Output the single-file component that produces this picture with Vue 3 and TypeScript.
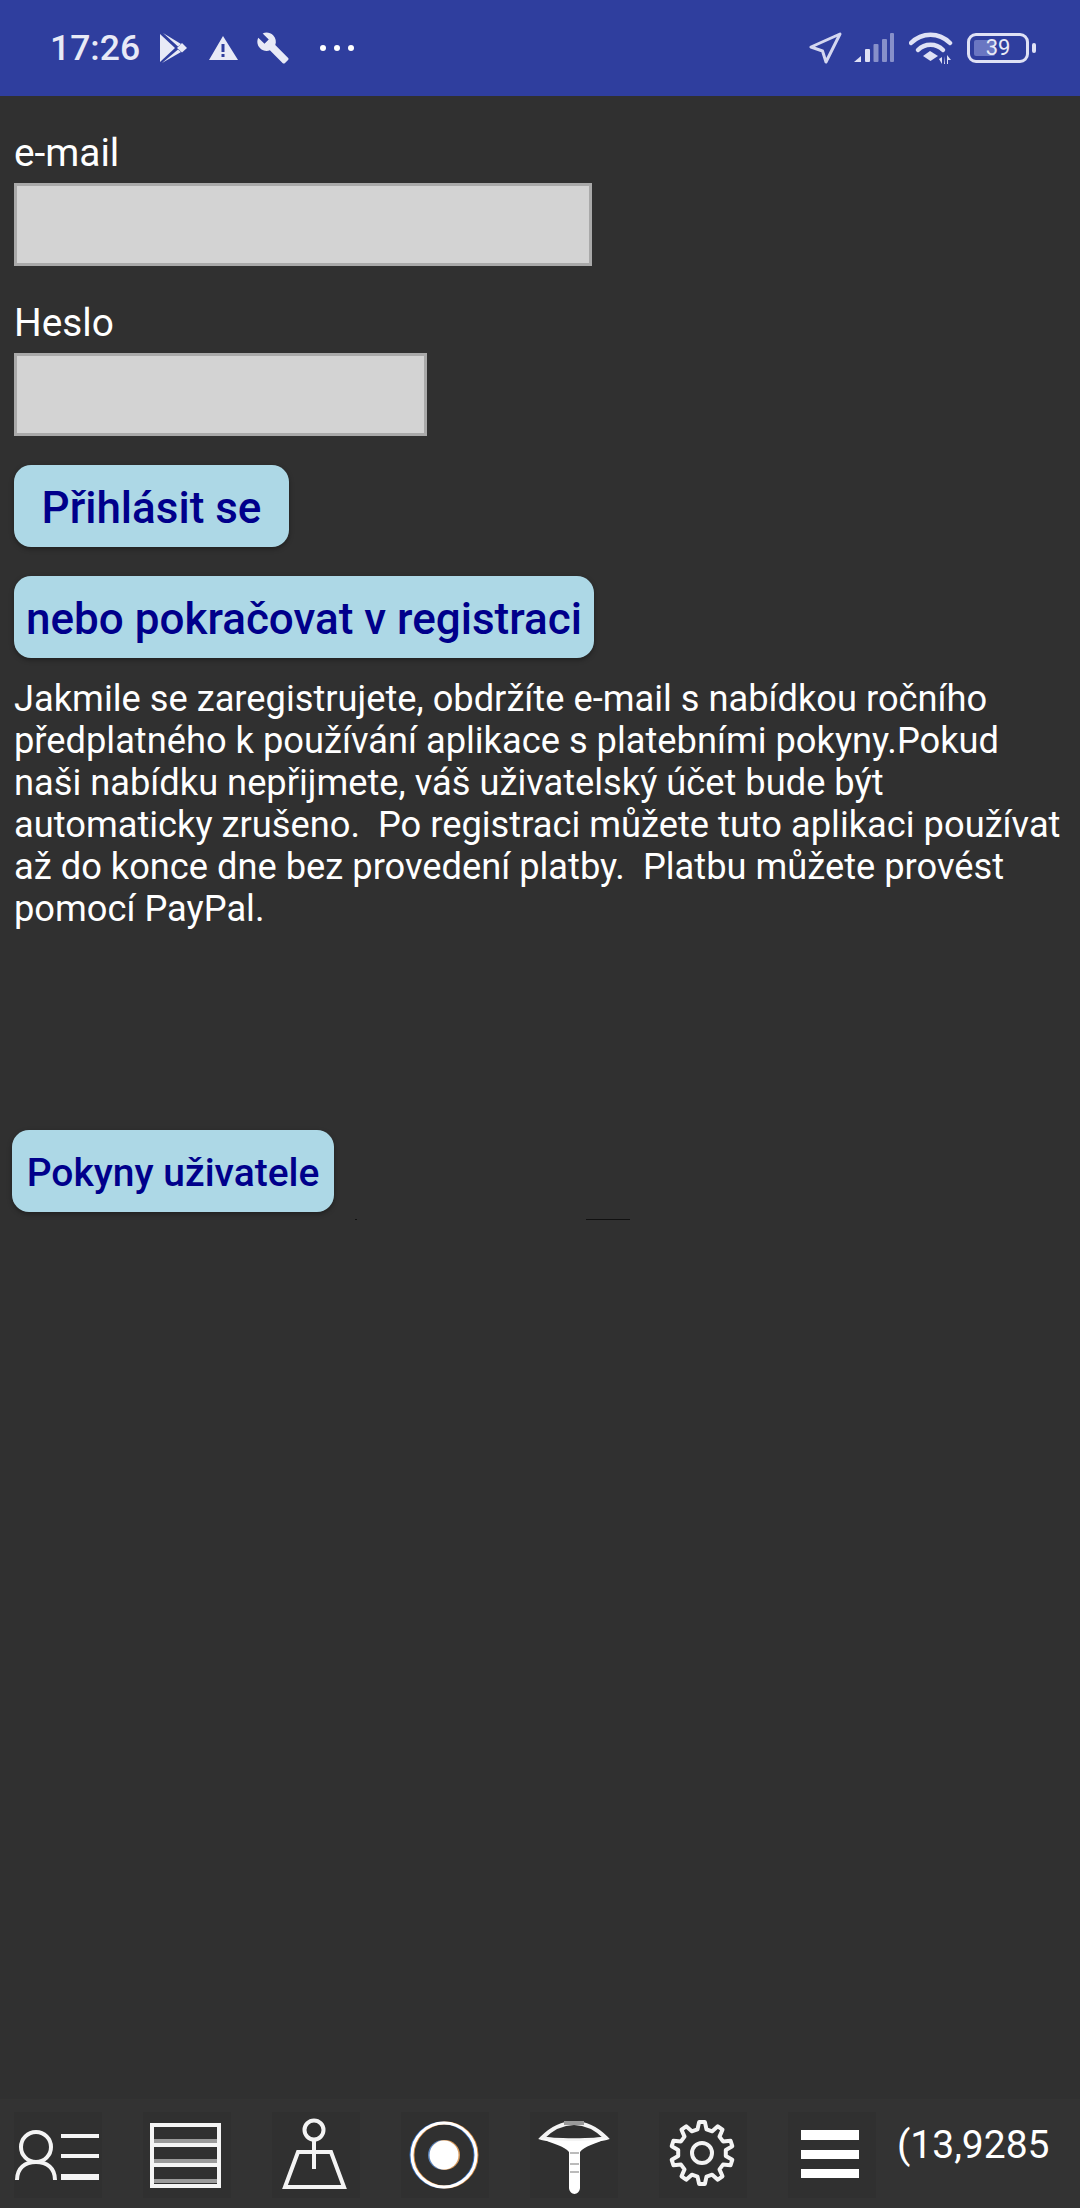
<script setup lang="ts">
const info =
  'Jakmile se zaregistrujete, obdržíte e-mail s nabídkou ročního předplatného k používání aplikace s platebními pokyny.Pokud naši nabídku nepřijmete, váš uživatelský účet bude být automaticky zrušeno.  Po registraci můžete tuto aplikaci používat až do konce dne bez provedení platby.  Platbu můžete provést pomocí PayPal.'

// gear outline, 10 teeth
function gearPath(cx: number, cy: number, outer: number, inner: number, teeth: number): string {
  const pts: string[] = []
  for (let i = 0; i < teeth; i++) {
    const step = (Math.PI * 2) / teeth
    const a = i * step - Math.PI / 2
    const list: [number, number][] = [
      [a - step * 0.3, inner],
      [a - step * 0.15, outer],
      [a + step * 0.15, outer],
      [a + step * 0.3, inner],
    ]
    for (const [ang, r] of list) {
      pts.push(`${(cx + Math.cos(ang) * r).toFixed(1)} ${(cy + Math.sin(ang) * r).toFixed(1)}`)
    }
  }
  return 'M' + pts.join('L') + 'Z'
}
const gear = gearPath(43, 41, 31, 24, 10)
</script>

<template>
  <div class="page">
    <header class="status">
      <div class="status-left">
        <span class="time">17:26</span>
        <svg class="play" width="27" height="30" viewBox="0 0 27 30">
          <path d="M0 1 15 15 0 29Z" />
          <path d="M3 0 21 11 18 13.500Z" />
          <path d="M2 30 21 19 18 16.500Z" />
          <path d="M17 15 22 10 27 15 22 19.500Z" />
        </svg>
        <svg class="warn" width="29" height="24" viewBox="0 0 29 24">
          <path fill-rule="evenodd" d="M14 0 29 24H0ZM12.500 8v8h3V8ZM12.500 18v3h3v-3Z" />
        </svg>
        <svg class="wrench" width="34" height="34" viewBox="0 0 24 24">
          <path d="M22.700 19l-9.100-9.100c.9-2.300.4-5-1.500-6.900-2-2-5-2.400-7.400-1.300L9 6 6 9 1.600 4.700C.4 7.100.9 10.100 2.900 12.100c1.900 1.900 4.600 2.400 6.900 1.500l9.100 9.100c.4.4 1 .4 1.400 0l2.300-2.300c.5-.4.5-1.100.1-1.400z" />
        </svg>
        <svg class="dots" width="34" height="8" viewBox="0 0 34 8">
          <circle cx="3" cy="4" r="3" />
          <circle cx="17" cy="4" r="3" />
          <circle cx="31" cy="4" r="3" />
        </svg>
      </div>
      <div class="status-right">
        <svg width="33" height="32" viewBox="0 0 33 32" class="nav">
          <path d="M2 15 31 2 17 30 13.500 19Z" />
        </svg>
        <svg class="signal" width="40" height="30" viewBox="0 0 40 30">
          <path d="M0 29 7 23V29Z" />
          <rect x="11" y="16" width="5" height="13" rx="1" />
          <rect x="19.500" y="11" width="5" height="18" rx="1" opacity=".5" />
          <rect x="28" y="6" width="5" height="23" rx="1" opacity=".5" />
          <rect x="36" y="0" width="4" height="29" rx="1" opacity=".5" />
        </svg>
        <svg class="wifi" width="44" height="34" viewBox="0 0 44 34">
          <path class="arc" d="M2 12C13 1 30 1 41 12" />
          <path class="arc" d="M9 19C16 12 27 12 34 19" />
          <path d="M14 25 21 20 29 25 21.500 30Z" />
          <path d="M33 33V26L30 28ZM36 25V33H35ZM38 33V24L42 29H39V33Z" />
        </svg>
        <div class="battery">
          <div class="battery-body">
            <span class="battery-fill"></span>
            <span class="battery-num">39</span>
          </div>
          <span class="battery-nub"></span>
        </div>
      </div>
    </header>

    <main class="content">
      <label class="label first">e-mail</label>
      <input class="field email" type="text" />
      <label class="label">Heslo</label>
      <input class="field password" type="password" />
      <button class="btn login">Přihlásit se</button>
      <button class="btn register">nebo pokračovat v registraci</button>
      <p class="info">{{ info }}</p>
      <button class="btn guide">Pokyny uživatele</button>
      <div class="specks">
        <span class="speck-dot"></span>
        <span class="speck-line"></span>
      </div>
    </main>

    <footer class="toolbar">
      <div class="tool">
        <svg width="88" height="88" viewBox="0 0 88 88">
          <circle class="ln" cx="22" cy="35" r="15" />
          <path class="ln" d="M3 68C3 56 11 50 22 50 33 50 41 56 41 68" />
          <path class="ln" d="M47 24H85M47 44H85" />
          <path class="ln thick" d="M47 65H85" />
        </svg>
      </div>
      <div class="tool">
        <svg width="88" height="88" viewBox="0 0 88 88">
          <path class="grey" d="M10 29H75M10 49H75M10 69H75" />
          <rect class="ln" x="9" y="13" width="67" height="61" />
          <path class="ln" d="M9 33H76M9 53H76" />
        </svg>
      </div>
      <div class="tool">
        <svg width="88" height="88" viewBox="0 0 88 88">
          <circle class="ln" cx="42" cy="18" r="9.500" />
          <path class="ln" d="M42 28V57" />
          <path class="ln" d="M13 75 26 40H59L72 75Z" />
        </svg>
      </div>
      <div class="tool">
        <svg width="88" height="88" viewBox="0 0 88 88">
          <circle class="ring blue" cx="42" cy="43" r="32" />
          <circle class="ring orange" cx="44" cy="43" r="32" />
          <circle class="ring" cx="43" cy="43" r="32" />
          <circle cx="42" cy="43" r="15" fill="#5a86c0" />
          <circle cx="44" cy="43" r="15" fill="#d69a5c" />
          <circle cx="43" cy="43" r="14.500" fill="#fff" />
        </svg>
      </div>
      <div class="tool">
        <svg width="88" height="88" viewBox="0 0 88 88">
          <path class="ln" d="M12 26C22 16 33 11 44 11 55 11 66 16 76 26 66 29 22 29 12 26Z" />
          <path class="grey" d="M34 11H54" />
          <path d="M11 26C24 30 64 30 77 26 66 32 54 34 50 40V76C50 79 47 82 44.500 82 42 82 39 79 39 76V40C35 34 22 32 11 26Z" fill="#fff" />
          <path class="grey mark" d="M40 41H49M40 52H49M40 60H49" />
        </svg>
      </div>
      <div class="tool">
        <svg width="88" height="88" viewBox="0 0 88 88">
          <path class="ln" :d="gear" stroke-linejoin="round" />
          <circle class="ln" cx="43" cy="41" r="10" />
        </svg>
      </div>
      <div class="tool">
        <svg width="88" height="88" viewBox="0 0 88 88">
          <rect x="13" y="18" width="58" height="10" fill="#fff" />
          <rect x="13" y="38" width="58" height="9" fill="#fff" />
          <rect x="13" y="57" width="58" height="9" fill="#fff" />
        </svg>
      </div>
      <span class="coords">(13,9285</span>
    </footer>
  </div>
</template>

<style>
html,
body {
  margin: 0;
  background: #303030;
}
</style>

<style scoped>
.page {
  width: 1080px;
  height: 2208px;
  display: flex;
  flex-direction: column;
  background: #303030;
  font-family: Roboto, "Liberation Sans", sans-serif;
  overflow: hidden;
}

.status {
  height: 96px;
  flex: none;
  background: #2f3e9e;
  display: flex;
  justify-content: space-between;
  align-items: center;
  box-sizing: border-box;
  padding: 0 44px 0 50px;
}

.status svg {
  display: block;
  fill: #e8eaf6;
}

.status-left,
.status-right {
  display: flex;
  align-items: center;
}

.time {
  width: 89px;
  color: #e8eaf6;
  font-size: 35.500px;
  font-weight: 500;
}

.play {
  margin-left: 21px;
}
.warn {
  margin-left: 22px;
}
.wrench {
  margin-left: 18px;
}
.dots {
  margin-left: 30px;
}
.dots circle {
  fill: #fff;
}

.status .nav {
  fill: none;
}
.nav path {
  fill: none;
  stroke: #d4d7f0;
  stroke-width: 3;
  stroke-linejoin: round;
}

.status .signal {
  fill: #dfe1f5;
  margin-left: 12px;
}

.status .wifi {
  fill: #dfe1f5;
  margin-left: 15px;
}
.wifi .arc {
  fill: none;
  stroke: #dfe1f5;
  stroke-width: 4.500;
  stroke-linecap: round;
}

.battery {
  margin-left: 14px;
  display: flex;
  align-items: center;
}
.battery-body {
  width: 62px;
  height: 30px;
  box-sizing: border-box;
  border: 3px solid #dfe1f5;
  border-radius: 9px;
  display: flex;
  align-items: center;
  justify-content: center;
  position: relative;
}
.battery-fill {
  position: absolute;
  left: 4px;
  top: 4px;
  bottom: 4px;
  width: 21px;
  background: #6a76c2;
  border-radius: 2px;
}
.battery-num {
  position: relative;
  color: #e8eaf6;
  font-size: 22px;
  line-height: 1;
}
.battery-nub {
  width: 4px;
  height: 10px;
  margin-left: 3px;
  background: #dfe1f5;
  border-radius: 2px;
}

.content {
  flex: 1;
  display: flex;
  flex-direction: column;
  align-items: flex-start;
  padding: 0 14px;
}

.label {
  color: #fff;
  font-size: 38.800px;
  line-height: 44px;
  margin-top: 35px;
  margin-bottom: 8px;
}

.field {
  display: block;
  height: 83px;
  box-sizing: border-box;
  border: 3px solid #a9a9a9;
  background: #d3d3d3;
  border-radius: 0;
  margin: 0;
  padding: 0;
  outline: none;
}
.email {
  width: 578px;
}
.password {
  width: 413px;
}

.btn {
  height: 82px;
  box-sizing: border-box;
  border: none;
  border-radius: 17px;
  background: #add8e6;
  color: #00008b;
  font-family: inherit;
  font-weight: 500;
  font-size: 44px;
  padding: 3px 0 0;
  margin: 29px 0 0;
  box-shadow: 0 2px 5px rgba(0, 0, 0, 0.35);
}
.login {
  width: 275px;
}
.register {
  width: 580px;
}
.guide {
  width: 322px;
  margin: 200px 0 0 -2px;
  font-size: 39px;
}

.info {
  margin: 20px 0 0;
  color: #fff;
  font-size: 36.250px;
  line-height: 42px;
  white-space: pre-wrap;
  width: 1055px;
}

.specks {
  display: flex;
  align-items: center;
  height: 1px;
  margin-top: 7px;
}
.speck-dot {
  width: 2px;
  height: 1px;
  margin-left: 341px;
  background: #111;
}
.speck-line {
  width: 44px;
  height: 1px;
  margin-left: 229px;
  background: #111;
}

.toolbar {
  height: 109px;
  flex: none;
  background: #333333;
  box-sizing: border-box;
  padding: 13px 0 10px 14px;
  display: flex;
  align-items: flex-start;
  gap: 41px;
}

.tool {
  width: 88px;
  height: 86px;
  flex: none;
  background: #303030;
  overflow: hidden;
}
.tool svg {
  display: block;
  filter: blur(0.6px);
}

.ln {
  fill: none;
  stroke: #f4f4f4;
  stroke-width: 4;
}
.ln.thick {
  stroke-width: 6;
}
.grey {
  fill: none;
  stroke: #9a9a9a;
  stroke-width: 4;
}
.grey.mark {
  stroke-width: 2;
  stroke: #bbb;
}
.ring {
  fill: none;
  stroke: #fff;
  stroke-width: 3;
}
.ring.blue {
  stroke: #2f6fc4;
}
.ring.orange {
  stroke: #d98a3c;
}

.coords {
  margin-left: -20px;
  color: #fff;
  font-size: 39px;
  line-height: 66px;
  white-space: nowrap;
}
</style>
